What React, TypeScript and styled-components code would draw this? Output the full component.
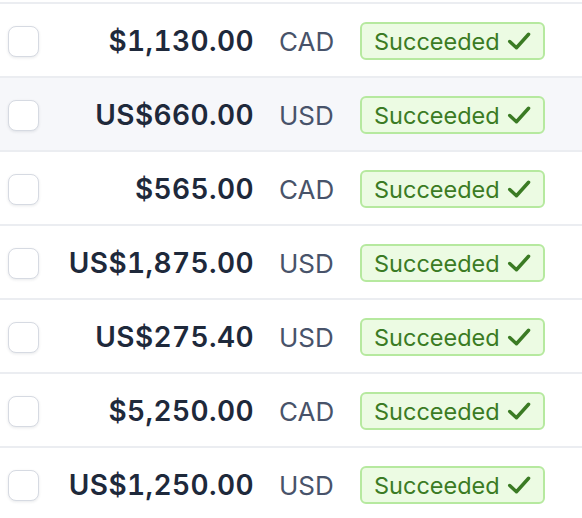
import * as React from 'react';
import styled, { createGlobalStyle } from 'styled-components';

const GlobalStyle = createGlobalStyle`
  html, body {
    margin: 0;
    padding: 0;
    background: #ffffff;
    font-family: Inter, "Noto Sans", "Liberation Sans", sans-serif;
  }
`;

interface Payment {
  amount: string;
  currency: string;
}

const payments: Payment[] = [
  { amount: '$1,130.00', currency: 'CAD' },
  { amount: 'US$660.00', currency: 'USD' },
  { amount: '$565.00', currency: 'CAD' },
  { amount: 'US$1,875.00', currency: 'USD' },
  { amount: 'US$275.40', currency: 'USD' },
  { amount: '$5,250.00', currency: 'CAD' },
  { amount: 'US$1,250.00', currency: 'USD' },
];

const Table = styled.div`
  margin-top: 2px;
  border-top: 2px solid #ebedf1;
  display: flex;
  flex-direction: column;
`;

const Row = styled.div<{ highlighted?: boolean }>`
  display: grid;
  grid-template-columns: 48px 206px 106px auto;
  align-items: center;
  height: 72px;
  border-bottom: 2px solid #ebedf1;
  background: ${({ highlighted }) => (highlighted ? '#f6f7fa' : '#ffffff')};
`;

const CheckCell = styled.div`
  display: flex;
  align-items: center;
  padding-left: 8px;
  padding-top: 2px;
`;

const Checkbox = styled.span`
  box-sizing: border-box;
  width: 31px;
  height: 31px;
  border-radius: 8px;
  border: 1.5px solid #d6dae2;
  background: #ffffff;
  box-shadow: 0 1px 3px rgba(30, 40, 60, 0.1);
`;

const Amount = styled.div`
  text-align: right;
  font-size: 28px;
  font-weight: 600;
  font-variant-numeric: tabular-nums;
  color: #1e293b;
  letter-spacing: 0.4px;
  padding-top: 2px;
`;

const Currency = styled.div`
  padding-left: 25px;
  padding-top: 2px;
  font-size: 26px;
  color: #48536a;
`;

const BadgeCell = styled.div`
  padding-top: 2px;
`;

const Badge = styled.span`
  box-sizing: border-box;
  display: inline-flex;
  align-items: center;
  gap: 7px;
  width: 185px;
  height: 38px;
  padding: 0 12px;
  border: 2px solid #b6e99f;
  border-radius: 6px;
  background: #ecfbe3;
  color: #3b7b24;
  font-size: 23.5px;
`;

const CheckIcon = () => (
  <svg width="27" height="24" viewBox="0 0 27 24" fill="none">
    <path
      d="M3 12.5 L10.5 19.5 L24 4.5"
      stroke="#3b7b24"
      strokeWidth="3.8"
      strokeLinecap="round"
      strokeLinejoin="round"
    />
  </svg>
);

export default function App() {
  return (
    <>
      <GlobalStyle />
      <Table>
        {payments.map((p, i) => (
          <Row key={i} highlighted={i === 1}>
            <CheckCell>
              <Checkbox />
            </CheckCell>
            <Amount>{p.amount}</Amount>
            <Currency>{p.currency}</Currency>
            <BadgeCell>
              <Badge>
                Succeeded
                <CheckIcon />
              </Badge>
            </BadgeCell>
          </Row>
        ))}
      </Table>
    </>
  );
}
